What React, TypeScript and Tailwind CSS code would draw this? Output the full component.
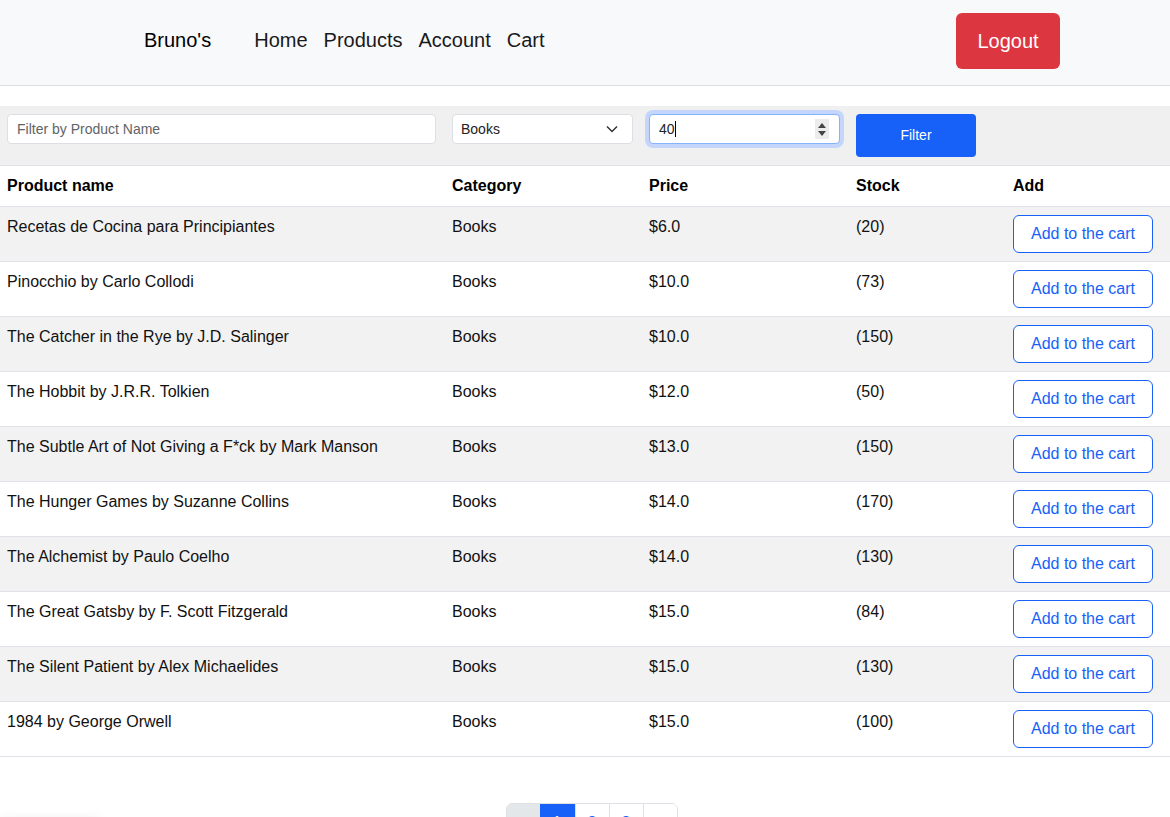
import React from "react";

type Product = { name: string; category: string; price: string; stock: number };

const products: Product[] = [
  { name: "Recetas de Cocina para Principiantes", category: "Books", price: "$6.0", stock: 20 },
  { name: "Pinocchio by Carlo Collodi", category: "Books", price: "$10.0", stock: 73 },
  { name: "The Catcher in the Rye by J.D. Salinger", category: "Books", price: "$10.0", stock: 150 },
  { name: "The Hobbit by J.R.R. Tolkien", category: "Books", price: "$12.0", stock: 50 },
  { name: "The Subtle Art of Not Giving a F*ck by Mark Manson", category: "Books", price: "$13.0", stock: 150 },
  { name: "The Hunger Games by Suzanne Collins", category: "Books", price: "$14.0", stock: 170 },
  { name: "The Alchemist by Paulo Coelho", category: "Books", price: "$14.0", stock: 130 },
  { name: "The Great Gatsby by F. Scott Fitzgerald", category: "Books", price: "$15.0", stock: 84 },
  { name: "The Silent Patient by Alex Michaelides", category: "Books", price: "$15.0", stock: 130 },
  { name: "1984 by George Orwell", category: "Books", price: "$15.0", stock: 100 },
];

const NavBar: React.FC = () => (
  <nav className="h-[86px] bg-[#f8f9fa] border-b border-[#dedede] flex items-center pl-[144px] pr-[110px]">
    <span className="text-[20px] text-black mr-[43px] -mt-[5px]">Bruno&apos;s</span>
    <div className="flex items-center gap-[16px] text-[20px] text-[#1a1a1a] -mt-[5px]">
      <a>Home</a>
      <a>Products</a>
      <a>Account</a>
      <a>Cart</a>
    </div>
    <button className="ml-auto -mt-[4px] w-[104px] h-[56px] rounded-[6px] bg-[#dc3641] text-white text-[20px]">
      Logout
    </button>
  </nav>
);

const FilterRow: React.FC = () => (
  <tr className="bg-[#f0f0f0] align-top">
    <td className="px-[7px] py-2">
      <input
        className="w-[429px] h-[30px] rounded-[4px] border border-[#dcdfe3] bg-white px-[9px] text-[14px] placeholder:text-[#5f6468] outline-none"
        placeholder="Filter by Product Name"
      />
    </td>
    <td className="px-[7px] py-2">
      <div className="w-[181px] h-[30px] rounded-[4px] border border-[#dcdfe3] bg-white pl-[8px] pr-[14px] flex items-center justify-between text-[14px] text-[#222]">
        <span>Books</span>
        <svg width="12" height="8" viewBox="0 0 12 8" fill="none" stroke="#333" strokeWidth="1.5">
          <path d="M1 1.5l5 5 5-5" />
        </svg>
      </div>
    </td>
    <td className="px-[7px] py-2">
      <div className="w-[191px] h-[30px] rounded-[4px] border border-[#86b2f9] ring-4 ring-[#c4d6fb] bg-white pl-[9px] pr-[10px] flex items-center text-[14px] text-[#222]">
        <span>40</span>
        <span className="w-px h-[16px] bg-black" />
        <span className="ml-auto w-[14px] h-[20px] bg-[#ececec] flex flex-col items-center justify-center gap-[3px]">
          <svg width="8" height="5" viewBox="0 0 8 5"><path d="M0 5L4 0L8 5Z" fill="#444" /></svg>
          <svg width="8" height="5" viewBox="0 0 8 5"><path d="M0 0L4 5L8 0Z" fill="#444" /></svg>
        </span>
      </div>
    </td>
    <td className="px-[7px] py-2" colSpan={2}>
      <button className="w-[120px] h-[43px] rounded-[4px] bg-[#1761f8] text-white text-[14px]">Filter</button>
    </td>
  </tr>
);

const App: React.FC = () => {
  return (
    <div className="min-h-screen bg-white font-['Liberation_Sans',Arial,sans-serif] text-[#111]">
      <NavBar />
      <div className="mt-[20px]">
        <table className="w-full table-fixed border-collapse text-[16px]">
          <colgroup>
            <col className="w-[445px]" />
            <col className="w-[197px]" />
            <col className="w-[207px]" />
            <col className="w-[157px]" />
            <col />
          </colgroup>
          <tbody>
            <FilterRow />
            <tr className="border-y border-[#dfe2e6] text-left">
              <th className="px-[7px] py-2 h-[40px] font-bold text-black">Product name</th>
              <th className="px-[7px] py-2 font-bold text-black">Category</th>
              <th className="px-[7px] py-2 font-bold text-black">Price</th>
              <th className="px-[7px] py-2 font-bold text-black">Stock</th>
              <th className="px-[7px] py-2 font-bold text-black">Add</th>
            </tr>
            {products.map((p, i) => (
              <tr key={p.name} className={`border-b border-[#dfe2e6] align-top ${i % 2 === 0 ? "bg-[#f2f2f2]" : "bg-white"}`}>
                <td className="px-[7px] py-2 leading-6">{p.name}</td>
                <td className="px-[7px] py-2 leading-6">{p.category}</td>
                <td className="px-[7px] py-2 leading-6">{p.price}</td>
                <td className="px-[7px] py-2 leading-6">({p.stock})</td>
                <td className="px-[7px] py-2">
                  <button className="w-[140px] h-[38px] rounded-[6px] border border-[#1761f8] bg-white text-[#1761f8] text-[16px]">
                    Add to the cart
                  </button>
                </td>
              </tr>
            ))}
          </tbody>
        </table>
      </div>
      <div className="flex justify-center mt-[46px] pl-[13px] pb-10">
        <ul className="flex text-[16px] border border-[#dee2e6] rounded-[6px] overflow-hidden">
          <li className="w-[33px] h-[38px] bg-[#e4e7ea] flex items-center justify-center text-[#6c757d]">«</li>
          <li className="w-[35px] h-[38px] bg-[#1761f8] flex items-center justify-center text-white">1</li>
          <li className="w-[34px] h-[38px] bg-white border-l border-[#dee2e6] flex items-center justify-center text-[#1761f8]">2</li>
          <li className="w-[34px] h-[38px] bg-white border-l border-[#dee2e6] flex items-center justify-center text-[#1761f8]">3</li>
          <li className="w-[34px] h-[38px] bg-white border-l border-[#dee2e6] flex items-center justify-center text-[#1761f8]">»</li>
        </ul>
      </div>
      <div className="fixed left-0 top-[822px] w-[100px] h-[40px] bg-white shadow-[0_0_14px_rgba(0,0,0,0.12)]" />
    </div>
  );
};

export default App;
